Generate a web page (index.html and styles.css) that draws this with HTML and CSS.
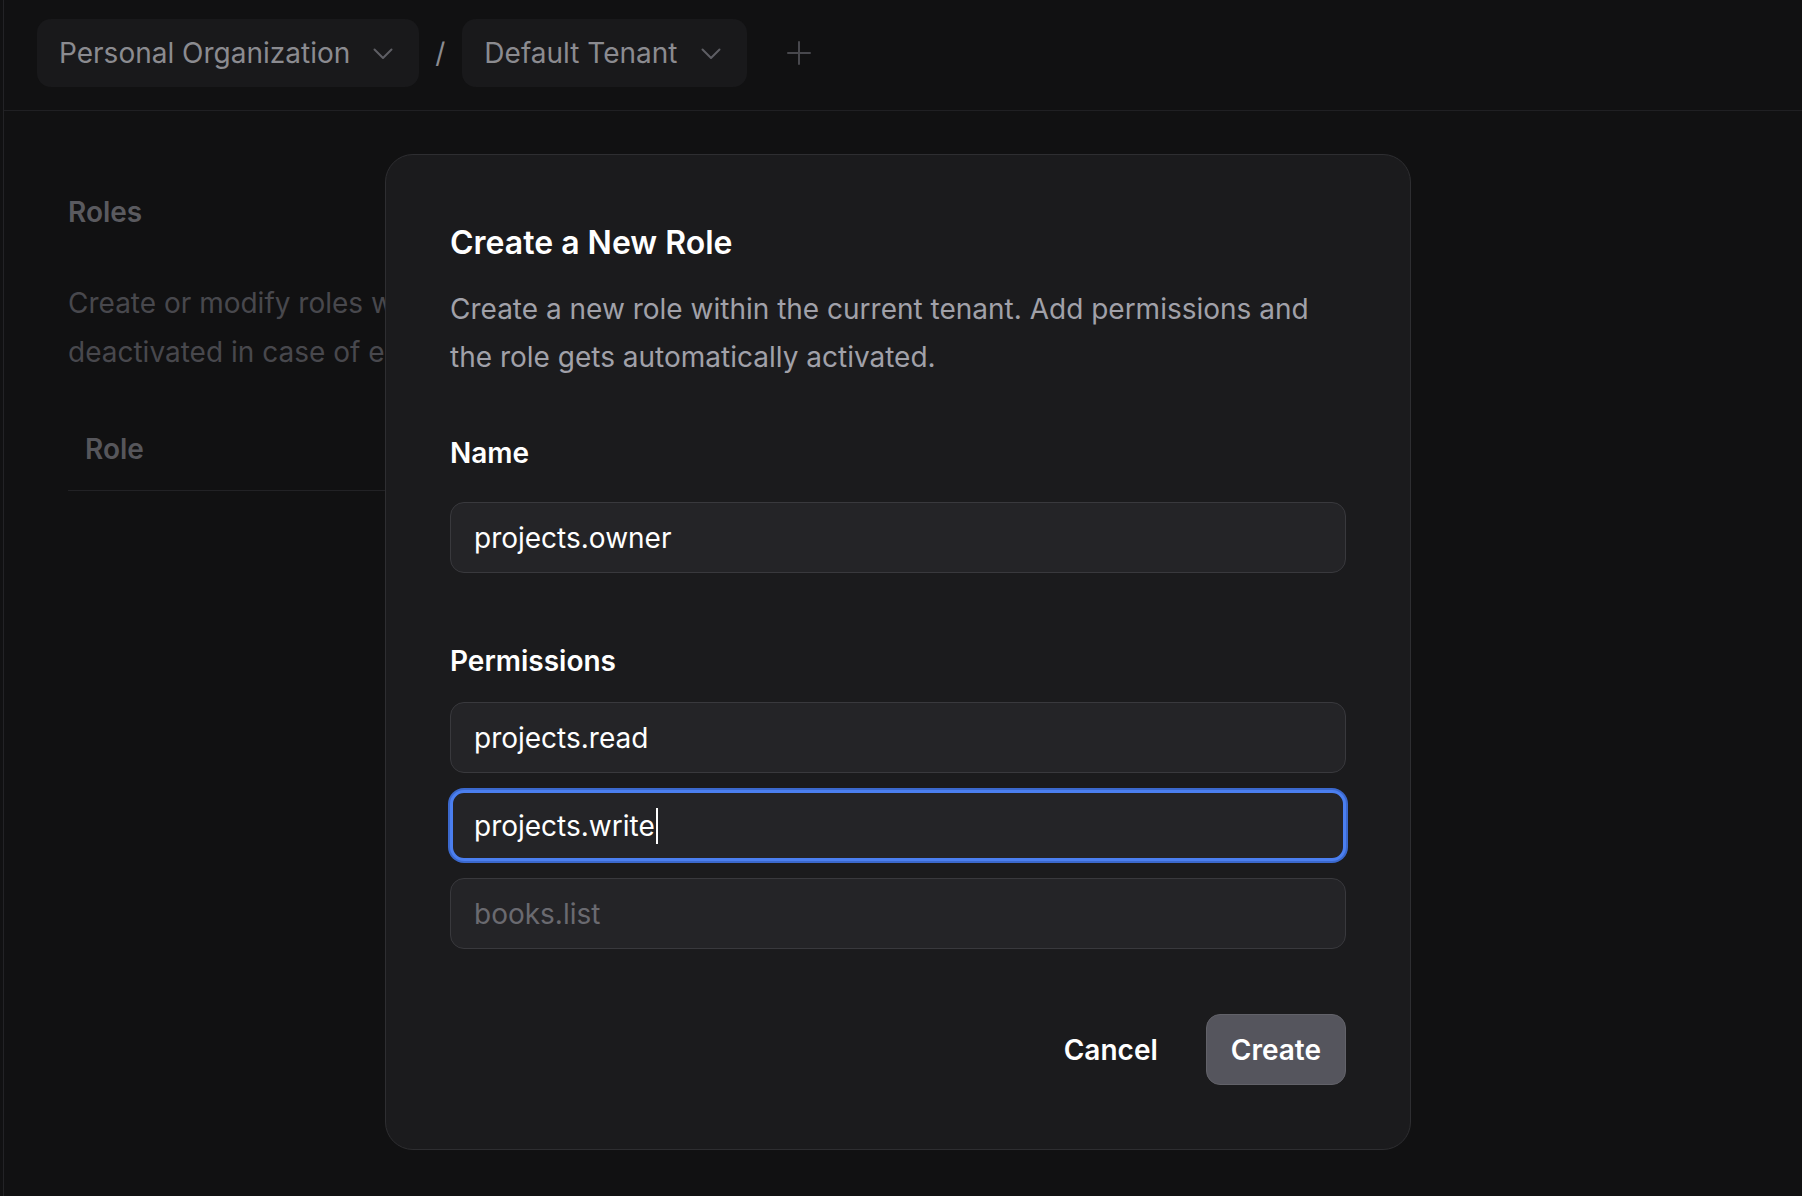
FILE: index.html
```html
<!DOCTYPE html>
<html lang="en">
<head>
<meta charset="utf-8">
<title>Roles – Create a New Role</title>
<link rel="stylesheet" href="styles.css">
</head>
<body>
<div class="app">
  <aside class="rail"></aside>
  <div class="main">
    <header class="topbar">
      <button class="pill">
        <span>Personal Organization</span>
        <svg class="chev" width="20" height="12" viewBox="0 0 20 12"><polyline points="1.5,1.5 10,10 18.5,1.5" fill="none" stroke="currentColor" stroke-width="2" stroke-linecap="round" stroke-linejoin="round"/></svg>
      </button>
      <span class="sep">/</span>
      <button class="pill">
        <span>Default Tenant</span>
        <svg class="chev" width="20" height="12" viewBox="0 0 20 12"><polyline points="1.5,1.5 10,10 18.5,1.5" fill="none" stroke="currentColor" stroke-width="2" stroke-linecap="round" stroke-linejoin="round"/></svg>
      </button>
      <button class="add" aria-label="Add">
        <svg width="24" height="24" viewBox="0 0 24 24"><path d="M12 1v22M1 12h22" fill="none" stroke="currentColor" stroke-width="2" stroke-linecap="round"/></svg>
      </button>
    </header>
    <section class="page">
      <h1 class="page-title">Roles</h1>
      <p class="page-desc">Create or modify roles within the current tenant. Roles can be<br>deactivated in case of emergency and reactivated later on.</p>
      <table class="roles-table">
        <thead>
          <tr><th>Role</th></tr>
        </thead>
      </table>
    </section>
  </div>
</div>

<div class="modal" role="dialog" aria-labelledby="modal-title">
  <h2 class="modal-title" id="modal-title">Create a New Role</h2>
  <p class="modal-desc">Create a new role within the current tenant. Add permissions and the role gets automatically activated.</p>

  <label class="field-label name-label">Name</label>
  <div class="input name-input">projects.owner</div>

  <label class="field-label perm-label">Permissions</label>
  <div class="perm-list">
    <div class="input">projects.read</div>
    <div class="input focused">projects.write<span class="caret"></span></div>
    <div class="input placeholder">books.list</div>
  </div>

  <div class="actions">
    <button class="btn btn-ghost">Cancel</button>
    <button class="btn btn-primary">Create</button>
  </div>
</div>
</body>
</html>
```

FILE: styles.css
```css
html, body {
  margin: 0;
  padding: 0;
}

body {
  width: 1802px;
  height: 1196px;
  overflow: hidden;
  background: #111112;
  font-family: Inter, "Noto Sans", sans-serif;
  position: relative;
}

button {
  font-family: inherit;
  cursor: pointer;
}

.app {
  display: flex;
  min-height: 1196px;
}

.rail {
  width: 3px;
  flex-shrink: 0;
  border-right: 1px solid #232326;
}

.main {
  flex: 1;
  min-width: 0;
}

/* top bar */
.topbar {
  height: 111px;
  box-sizing: border-box;
  border-bottom: 1px solid #202023;
  display: flex;
  align-items: flex-start;
  padding: 19px 0 0 33px;
}

.pill {
  height: 68px;
  display: flex;
  align-items: center;
  gap: 23px;
  padding: 0 26px 0 22px;
  background: #19191b;
  border: none;
  border-radius: 14px;
  color: #8b8b90;
  font-size: 28px;
  font-weight: 400;
}

.chev {
  color: #5e5e64;
  margin-top: 2px;
}

.sep {
  color: #8b8b90;
  font-size: 28px;
  line-height: 68px;
  margin: 0 17px 0 16px;
}

.add {
  margin-left: 40px;
  height: 68px;
  padding: 0;
  background: none;
  border: none;
  color: #48484d;
  display: flex;
  align-items: center;
}

/* page content (behind modal) */
.page {
  padding: 77px 0 0 64px;
  width: 317px;
  overflow: hidden;
}

.page-title {
  margin: 0;
  font-size: 28px;
  line-height: 48px;
  font-weight: 600;
  color: #5a5a5f;
}

.page-desc {
  margin: 43px 0 0;
  font-size: 28px;
  line-height: 49px;
  color: #48484d;
  white-space: nowrap;
}

.roles-table {
  margin-top: 48px;
  width: 100%;
  border-collapse: collapse;
}

.roles-table th {
  text-align: left;
  font-size: 28px;
  line-height: 48px;
  font-weight: 600;
  color: #56565b;
  padding: 0 17px 17px;
  border-bottom: 1px solid #222225;
}

/* modal */
.modal {
  position: absolute;
  left: 385px;
  top: 154px;
  width: 1026px;
  box-sizing: border-box;
  background: #1b1b1d;
  border: 1px solid #2e2e31;
  border-radius: 28px;
  padding: 66px 64px 64px;
}

.modal-title {
  margin: 0;
  font-size: 32px;
  line-height: 44px;
  font-weight: 600;
  color: #ffffff;
}

.modal-desc {
  margin: 20px 0 0;
  font-size: 28px;
  line-height: 48px;
  color: #a1a1a9;
}

.field-label {
  display: block;
  font-size: 28px;
  line-height: 48px;
  font-weight: 600;
  color: #ffffff;
}

.name-label {
  margin-top: 48px;
}

.name-input {
  margin-top: 25px;
}

.perm-label {
  margin-top: 64px;
}

.perm-list {
  margin-top: 17px;
  display: flex;
  flex-direction: column;
  gap: 17px;
}

.input {
  height: 71px;
  box-sizing: border-box;
  border: 1px solid #39393d;
  background: #242427;
  border-radius: 14px;
  padding: 0 23px;
  display: flex;
  align-items: center;
  font-size: 28px;
  color: #ffffff;
}

.input.focused {
  border: 3px solid #4b7ff0;
  box-shadow: 0 0 0 2px #3b68cc;
  padding: 0 21px;
}

.input.placeholder {
  color: #6a6a70;
}

.caret {
  display: inline-block;
  width: 2px;
  height: 36px;
  background: #ffffff;
  margin-left: 1px;
}

.actions {
  display: flex;
  justify-content: flex-end;
  gap: 24px;
  margin-top: 65px;
}

.btn {
  height: 71px;
  font-size: 28px;
  font-weight: 600;
  border-radius: 14px;
  padding: 0 24px;
  color: #ffffff;
}

.btn-ghost {
  background: transparent;
  border: none;
}

.btn-primary {
  background: #55555d;
  border: 1px solid #626269;
}
```
